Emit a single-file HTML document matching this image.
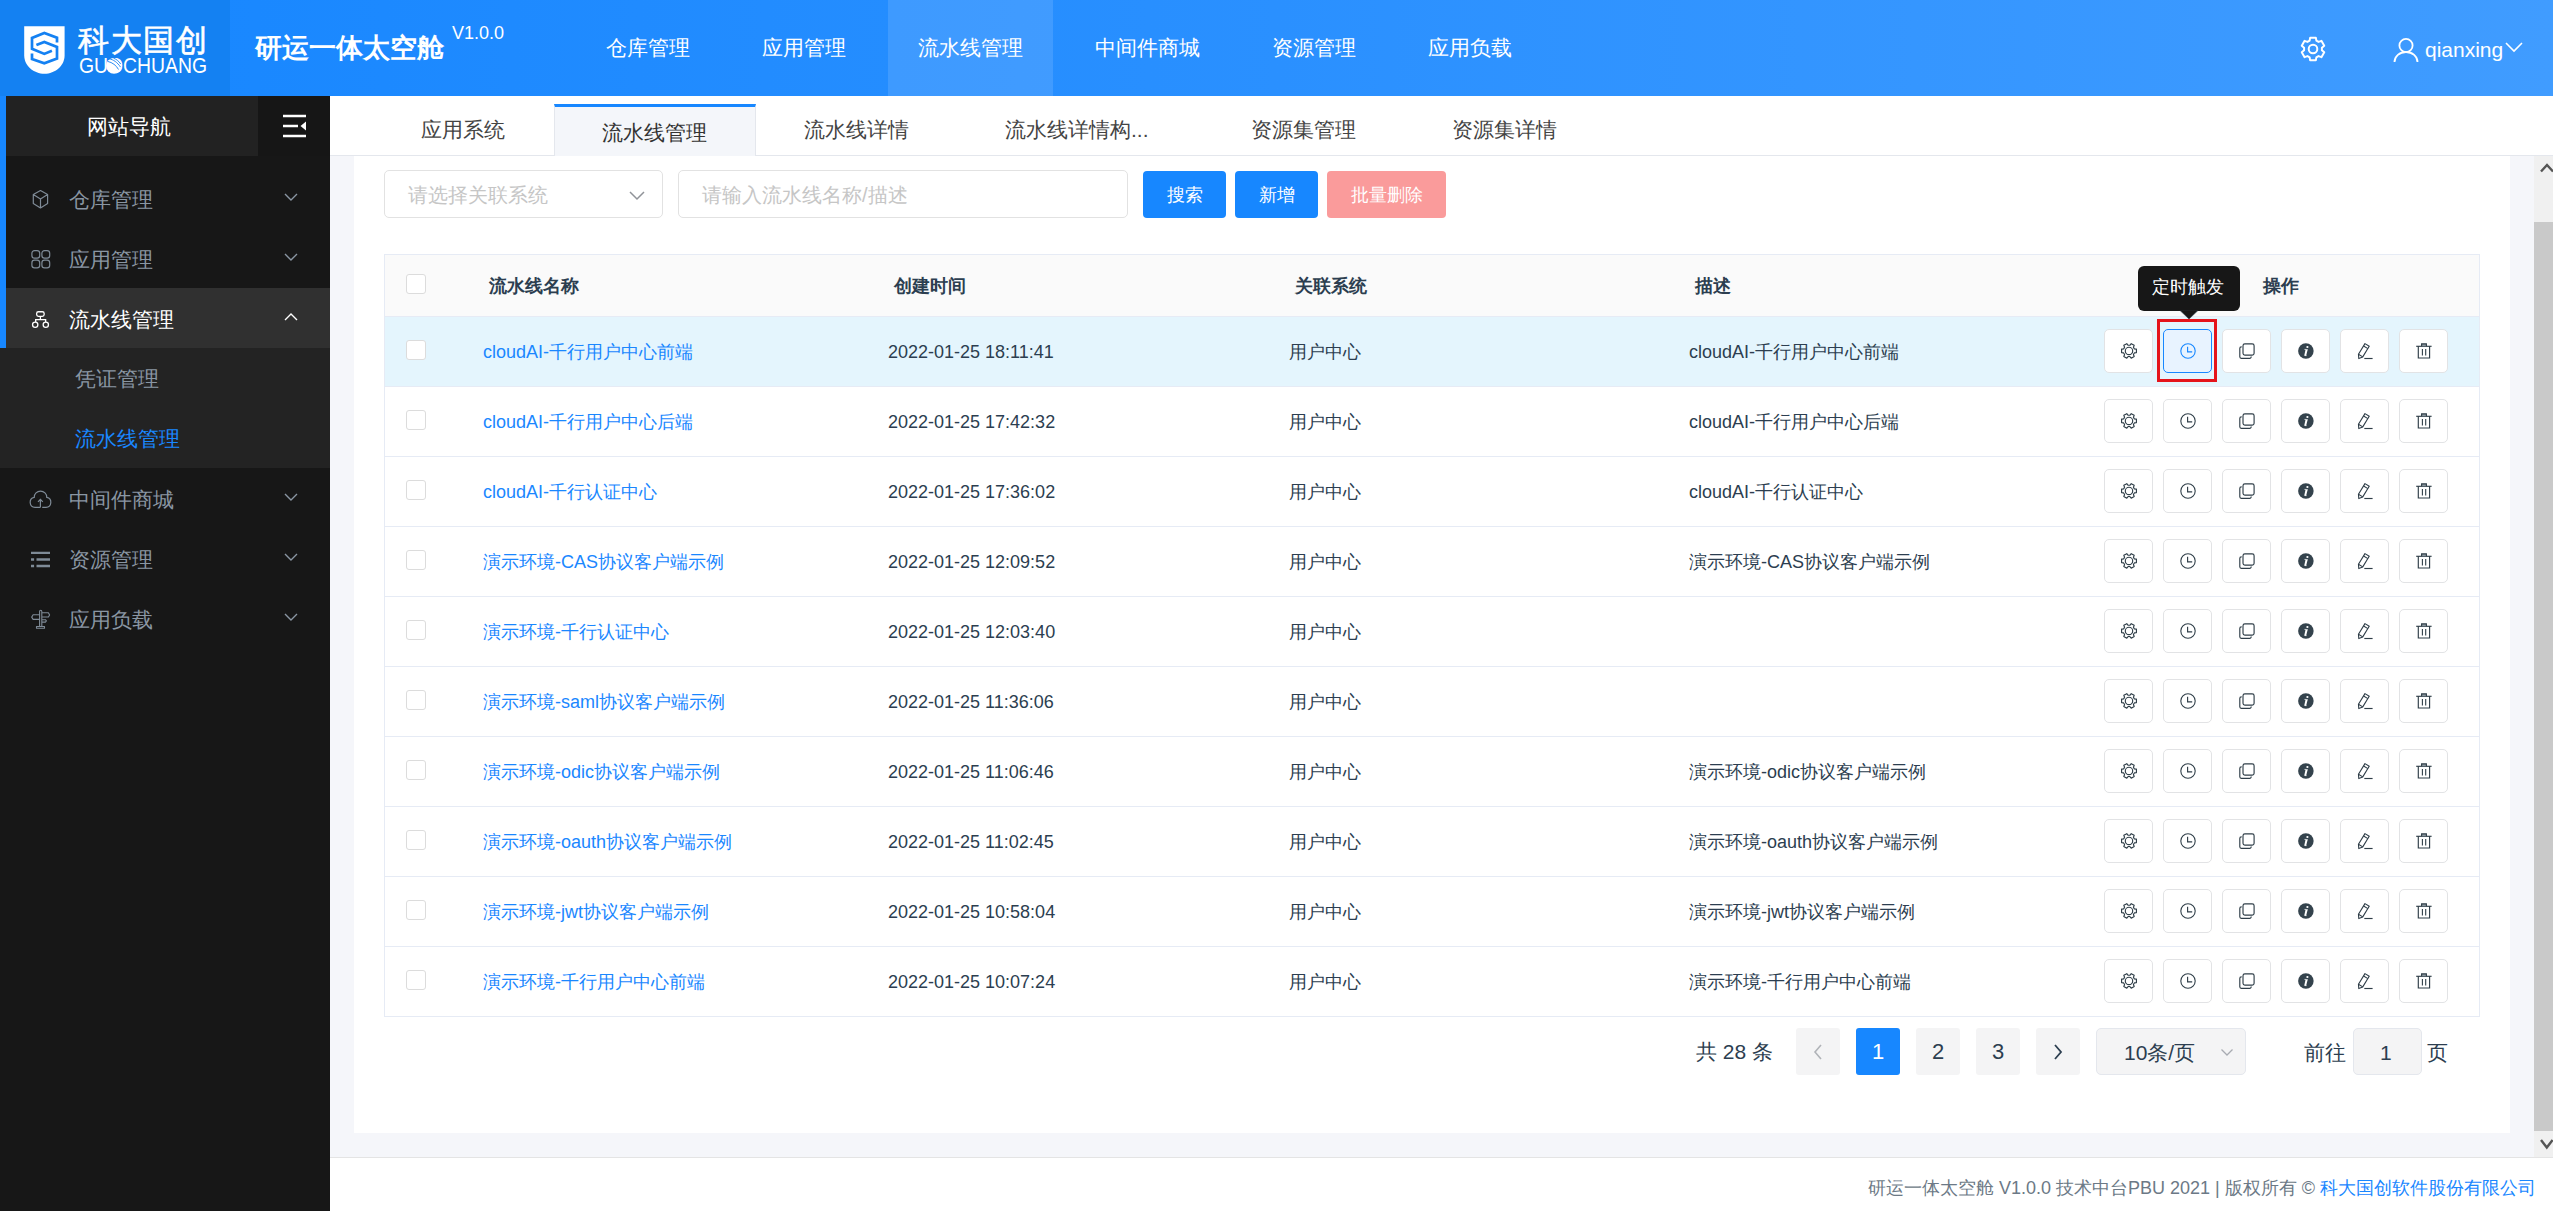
<!DOCTYPE html><html><head><meta charset="utf-8"><style>
*{box-sizing:border-box;margin:0;padding:0}
html,body{width:2553px;height:1211px;overflow:hidden;background:#fff;font-family:"Liberation Sans",sans-serif;color:#2c3e50}
.a{position:absolute}
.t{position:absolute;white-space:nowrap;line-height:1}
#hdr{left:0;top:0;width:2553px;height:96px;background:linear-gradient(90deg,#1686ff 0%,#2a90ff 50%,#409cff 100%)}
#logo{left:0;top:0;width:230px;height:96px;background:#1481f2}
.nav{color:#fff;font-size:21px}
#side{left:0;top:96px;width:330px;height:1115px;background:#171717}
.mi{color:#8a96a3;font-size:21px}
#main{left:330px;top:96px;width:2223px;height:1115px;background:#fff}
#tabs{left:330px;top:96px;width:2223px;height:60px;background:#fff;border-bottom:1px solid #e4e7ed}
.tab{color:#444;font-size:21px}
#gray{left:330px;top:156px;width:2204px;height:1001px;background:#f5f6fa}
#card{left:354px;top:156px;width:2156px;height:977px;background:#fff}
.btn{border-radius:4px;color:#fff;font-size:18px;display:flex;align-items:center;justify-content:center}
.cb{width:20px;height:20px;border:1px solid #dcdcdc;border-radius:3px;background:#fff}
.cell{font-size:18px;color:#2c3e50}
.hd{font-size:18px;font-weight:bold;color:#2c3e50}
.lnk{color:#1a87ff}
.ab{width:49px;height:44px;border:1px solid #e2e3e5;border-radius:5px;background:#fff;display:flex;align-items:center;justify-content:center}
.pg{width:44px;height:47px;background:#f4f4f5;border-radius:3px;font-size:22px;color:#2c3e50;display:flex;align-items:center;justify-content:center}
</style></head><body>
<div class="a" id="hdr"></div><div class="a" id="logo"></div>
<svg class="a" style="left:24px;top:26px" width="41" height="48" viewBox="0 0 41 48"><path d="M0.2 0.2H40.6V29.3C40.6 40 31 47.8 20.4 47.8S0.2 40 0.2 29.3z" fill="#fff"/><path d="M33 16.6V11.7L20.3 6.9 8 12V22.8L20.3 27.9 27.9 24.7" fill="none" stroke="#1481f2" stroke-width="2.7"/><path d="M12.4 19.1 20.3 15.9 33 21V32.5L20.3 37.2 8 33V27.6" fill="none" stroke="#1481f2" stroke-width="2.7"/></svg>
<div class="t" style="left:78px;top:25px;font-size:31px;color:#fff;letter-spacing:1.5px;-webkit-text-stroke:0.6px #fff">科大国创</div>
<svg class="a" style="left:78px;top:52px" width="132" height="26" viewBox="0 0 132 26"><text x="1" y="21.4" font-family="Liberation Sans" font-size="21.5" fill="#fff" textLength="128" lengthAdjust="spacingAndGlyphs">GUOCHUANG</text><circle cx="36" cy="13.8" r="7.9" fill="#fff"/><path d="M31.5 6.9c3.5 0.6 8 3.4 11 8.2M35.5 6.2c3 1 5.5 3.2 7.2 5.8M30 9.5c4 0.8 8.5 4 10.5 8" fill="none" stroke="#1481f2" stroke-width="0.9"/></svg>
<div class="t" style="left:255px;top:35px;font-size:27px;font-weight:bold;color:#fff">研运一体太空舱</div>
<div class="t" style="left:452px;top:24px;font-size:18px;color:#fff">V1.0.0</div>
<div class="a" style="left:888px;top:0;width:165px;height:96px;background:rgba(255,255,255,0.12)"></div>
<div class="t nav" style="left:606px;top:37px">仓库管理</div>
<div class="t nav" style="left:762px;top:37px">应用管理</div>
<div class="t nav" style="left:918px;top:37px">流水线管理</div>
<div class="t nav" style="left:1095px;top:37px">中间件商城</div>
<div class="t nav" style="left:1272px;top:37px">资源管理</div>
<div class="t nav" style="left:1428px;top:37px">应用负载</div>
<svg class="a" style="left:2298px;top:34px" width="30" height="30" viewBox="0 0 30 30"><path d="M23.34 18.37 L26.35 17.83 L26.35 12.17 L23.34 11.63 L22.09 9.46 L23.13 6.58 L18.22 3.75 L16.25 6.09 L13.75 6.09 L11.78 3.75 L6.87 6.58 L7.91 9.46 L6.66 11.63 L3.65 12.17 L3.65 17.83 L6.66 18.37 L7.91 20.54 L6.87 23.42 L11.78 26.25 L13.75 23.91 L16.25 23.91 L18.22 26.25 L23.13 23.42 L22.09 20.54Z" transform="rotate(30 15 15)" fill="none" stroke="#fff" stroke-width="2" stroke-linejoin="round"/><circle cx="15" cy="15" r="4.3" fill="none" stroke="#fff" stroke-width="2"/></svg>
<svg class="a" style="left:2392px;top:36px" width="28" height="28" viewBox="0 0 28 28"><circle cx="14" cy="9.5" r="6.6" fill="none" stroke="#fff" stroke-width="1.8"/><path d="M2.5 26a11.5 10 0 0 1 23 0" fill="none" stroke="#fff" stroke-width="1.8"/></svg>
<div class="t" style="left:2425px;top:39px;font-size:21px;color:#fff">qianxing</div>
<svg class="a" style="left:2504px;top:41px" width="20" height="12" viewBox="0 0 20 12"><path d="M2 2l8 8 8-8" fill="none" stroke="#fff" stroke-width="1.6"/></svg>
<div class="a" id="side"></div>
<div class="a" style="left:6px;top:96px;width:252px;height:60px;background:#222"></div>
<div class="a" style="left:258px;top:96px;width:72px;height:60px;background:#161616"></div>
<div class="a" style="left:0;top:96px;width:6px;height:252px;background:#1787ff"></div>
<div class="t" style="left:87px;top:116px;font-size:21px;color:#fff">网站导航</div>
<svg class="a" style="left:282px;top:114px" width="26" height="24" viewBox="0 0 26 24"><path d="M1 2h23M1 12h15M1 22h23" stroke="#fff" stroke-width="2.4"/><path d="M24 7.5v9L18.5 12z" fill="#fff"/></svg>
<div class="a" style="left:6px;top:288px;width:324px;height:60px;background:#303030"></div>
<div class="a" style="left:0;top:348px;width:330px;height:120px;background:#232323"></div>
<div class="t mi" style="left:69px;top:189px;color:#8a96a3">仓库管理</div>
<svg class="a" style="left:283px;top:192px" width="16" height="10" viewBox="0 0 16 10"><path d="M2 2l6 6 6-6" fill="none" stroke="#8a96a3" stroke-width="1.4"/></svg>
<div class="t mi" style="left:69px;top:249px;color:#8a96a3">应用管理</div>
<svg class="a" style="left:283px;top:252px" width="16" height="10" viewBox="0 0 16 10"><path d="M2 2l6 6 6-6" fill="none" stroke="#8a96a3" stroke-width="1.4"/></svg>
<div class="t mi" style="left:69px;top:309px;color:#fff">流水线管理</div>
<svg class="a" style="left:283px;top:312px" width="16" height="10" viewBox="0 0 16 10"><path d="M2 8l6-6 6 6" fill="none" stroke="#fff" stroke-width="1.4"/></svg>
<div class="t mi" style="left:69px;top:489px;color:#8a96a3">中间件商城</div>
<svg class="a" style="left:283px;top:492px" width="16" height="10" viewBox="0 0 16 10"><path d="M2 2l6 6 6-6" fill="none" stroke="#8a96a3" stroke-width="1.4"/></svg>
<div class="t mi" style="left:69px;top:549px;color:#8a96a3">资源管理</div>
<svg class="a" style="left:283px;top:552px" width="16" height="10" viewBox="0 0 16 10"><path d="M2 2l6 6 6-6" fill="none" stroke="#8a96a3" stroke-width="1.4"/></svg>
<div class="t mi" style="left:69px;top:609px;color:#8a96a3">应用负载</div>
<svg class="a" style="left:283px;top:612px" width="16" height="10" viewBox="0 0 16 10"><path d="M2 2l6 6 6-6" fill="none" stroke="#8a96a3" stroke-width="1.4"/></svg>
<svg class="a" style="left:31px;top:189px" width="19" height="21" viewBox="0 0 19 21"><path d="M9.5 1.6 16.6 5.6V14.6L9.5 18.9 2.3 14.6V5.6Z M2.3 5.6 9.5 9.9 16.6 5.6 M9.5 9.9V18.9" fill="none" stroke="#7f8b97" stroke-width="1.2" stroke-linejoin="round"/></svg>
<svg class="a" style="left:31px;top:249px" width="20" height="20" viewBox="0 0 20 20"><rect x="0.9" y="1.6" width="7.8" height="7.6" rx="2.6" fill="none" stroke="#7f8b97" stroke-width="1.2"/><rect x="10.9" y="1.6" width="7.8" height="7.6" rx="2.6" fill="none" stroke="#7f8b97" stroke-width="1.2"/><rect x="0.9" y="11.2" width="7.8" height="7.6" rx="2.6" fill="none" stroke="#7f8b97" stroke-width="1.2"/><rect x="10.9" y="11.2" width="7.8" height="7.6" rx="2.6" fill="none" stroke="#7f8b97" stroke-width="1.2"/></svg>
<svg class="a" style="left:31px;top:309px" width="20" height="20" viewBox="0 0 20 20"><rect x="5.65" y="2.75" width="7.5" height="4.6" rx="1.8" fill="none" stroke="#fff" stroke-width="1.3"/><path d="M9.4 7.35V10.65M4.65 13V10.65H14.65V13" fill="none" stroke="#fff" stroke-width="1.3"/><circle cx="4.2" cy="15.8" r="2.65" fill="none" stroke="#fff" stroke-width="1.3"/><circle cx="14.8" cy="15.8" r="2.65" fill="none" stroke="#fff" stroke-width="1.3"/></svg>
<svg class="a" style="left:29px;top:488px" width="24" height="22" viewBox="0 0 24 22"><path d="M11.4 19.3H6A5 5 0 0 1 5.2 9.4A6.2 6.2 0 0 1 17.8 9.4A5 5 0 0 1 17 19.3H13.2" fill="none" stroke="#7f8b97" stroke-width="1.2"/><path d="M11.4 19.3V11.6M9 13.8 11.4 11.3 13.8 13.8" fill="none" stroke="#7f8b97" stroke-width="1.2"/></svg>
<svg class="a" style="left:31px;top:550px" width="20" height="19" viewBox="0 0 20 19"><path d="M0 2.9H19M0 9.5H3.1M5.5 9.5H19M0 16H3.1M5.5 16H19" stroke="#7f8b97" stroke-width="2.4"/></svg>
<svg class="a" style="left:31px;top:608px" width="20" height="22" viewBox="0 0 20 22"><path d="M8.6 18.5V3.4a1.1 1.1 0 0 1 2.2 0V18.5 M10.8 4.7H17.4L18.6 6.9 17.4 9H10.8 M8.6 6.8H2.1L0.7 9.1 2.1 11.4H8.6 M10.8 11.7H14.4L15.4 12.9 14.4 14.1H10.8 M5.5 18.5H13.5V20.3H5.5Z" fill="none" stroke="#7f8b97" stroke-width="1.1" stroke-linejoin="round"/></svg>
<div class="t" style="left:75px;top:368px;font-size:21px;color:#8a96a3">凭证管理</div>
<div class="t" style="left:75px;top:428px;font-size:21px;color:#1a87ff">流水线管理</div>
<div class="a" id="tabs"></div>
<div class="a" style="left:554px;top:104px;width:202px;height:52px;background:#f4f6fa;border-top:3px solid #1787ff;border-left:1px solid #e4e7ed;border-right:1px solid #e4e7ed"></div>
<div class="t tab" style="left:421px;top:119px;color:#444">应用系统</div>
<div class="t tab" style="left:602px;top:122px;color:#333">流水线管理</div>
<div class="t tab" style="left:804px;top:119px;color:#444">流水线详情</div>
<div class="t tab" style="left:1005px;top:119px;color:#444">流水线详情构...</div>
<div class="t tab" style="left:1251px;top:119px;color:#444">资源集管理</div>
<div class="t tab" style="left:1452px;top:119px;color:#444">资源集详情</div>
<div class="a" id="gray"></div><div class="a" id="card"></div>
<div class="a" style="left:384px;top:170px;width:279px;height:48px;border:1px solid #e2e2e2;border-radius:5px;background:#fff"></div>
<div class="t" style="left:408px;top:185px;font-size:20px;color:#c6c6c6">请选择关联系统</div>
<svg class="a" style="left:628px;top:190px" width="18" height="12" viewBox="0 0 18 12"><path d="M2 2l7 7 7-7" fill="none" stroke="#909399" stroke-width="1.5"/></svg>
<div class="a" style="left:678px;top:170px;width:450px;height:48px;border:1px solid #e2e2e2;border-radius:5px;background:#fff"></div>
<div class="t" style="left:702px;top:185px;font-size:20px;color:#c6c6c6">请输入流水线名称/描述</div>
<div class="a btn" style="left:1143px;top:171px;width:83px;height:47px;background:#1787ff">搜索</div>
<div class="a btn" style="left:1235px;top:171px;width:83px;height:47px;background:#1787ff">新增</div>
<div class="a btn" style="left:1327px;top:171px;width:119px;height:47px;background:#fa9b9b">批量删除</div>
<div class="a" style="left:384px;top:254px;width:2096px;height:763px;border:1px solid #e6ebf5;background:#fff"></div>
<div class="a" style="left:385px;top:255px;width:2094px;height:61px;background:#fafafa"></div>
<div class="a" style="left:385px;top:316px;width:2094px;height:1px;background:#e6ebf5"></div>
<div class="a cb" style="left:406px;top:274px"></div>
<div class="t hd" style="left:489px;top:277px">流水线名称</div>
<div class="t hd" style="left:894px;top:277px">创建时间</div>
<div class="t hd" style="left:1295px;top:277px">关联系统</div>
<div class="t hd" style="left:1695px;top:277px">描述</div>
<div class="t hd" style="left:2263px;top:277px">操作</div>
<div class="a" style="left:385px;top:317px;width:2094px;height:69px;background:#e4f5fd"></div>
<div class="a" style="left:385px;top:386px;width:2094px;height:1px;background:#e6ebf5"></div>
<div class="a cb" style="left:406px;top:340px"></div>
<div class="t cell lnk" style="left:483px;top:343px">cloudAI-千行用户中心前端</div>
<div class="t cell" style="left:888px;top:343px">2022-01-25 18:11:41</div>
<div class="t cell" style="left:1289px;top:343px">用户中心</div>
<div class="t cell" style="left:1689px;top:343px">cloudAI-千行用户中心前端</div>
<div class="a ab" style="left:2104px;top:329px;"><svg width="18" height="18" viewBox="0 0 18 18"><path d="M14.32 10.94 L16.41 10.61 L16.41 7.19 L14.32 6.86 L13.43 5.31 L14.18 3.34 L11.22 1.63 L9.89 3.27 L8.11 3.27 L6.78 1.63 L3.82 3.34 L4.57 5.31 L3.68 6.86 L1.59 7.19 L1.59 10.61 L3.68 10.94 L4.57 12.49 L3.82 14.46 L6.78 16.17 L8.11 14.53 L9.89 14.53 L11.22 16.17 L14.18 14.46 L13.43 12.49Z" fill="none" stroke="#2f3e48" stroke-width="1.15" stroke-linejoin="round"/><circle cx="9" cy="8.9" r="3.7" fill="none" stroke="#2f3e48" stroke-width="1.15"/></svg></div>
<div class="a ab" style="left:2163px;top:329px;border-color:#1787ff;background:#e8f3ff;"><svg width="18" height="18" viewBox="0 0 18 18"><circle cx="9" cy="9" r="7.2" fill="none" stroke="#1787ff" stroke-width="1.1"/><path d="M8.6 4.8v5h4.6" fill="none" stroke="#1787ff" stroke-width="1.15"/></svg></div>
<div class="a ab" style="left:2222px;top:329px;"><svg width="18" height="18" viewBox="0 0 18 18"><rect x="5" y="1.8" width="11.1" height="11.3" rx="1.9" fill="none" stroke="#2f3e48" stroke-width="1.15"/><path d="M3.7 4.9h-.4a1.5 1.5 0 0 0-1.5 1.5v8.4a1.5 1.5 0 0 0 1.5 1.5h8.4a1.5 1.5 0 0 0 1.5-1.5v-.3" fill="none" stroke="#2f3e48" stroke-width="1.15"/></svg></div>
<div class="a ab" style="left:2281px;top:329px;"><svg width="18" height="18" viewBox="0 0 18 18"><circle cx="8.9" cy="9" r="7.75" fill="#34434d"/><ellipse cx="10.4" cy="4.9" rx="1.1" ry="1" fill="#fff"/><path d="M8.6 7.2h2.2l-1.7 6.6H7.2z" fill="#fff"/><path d="M7.4 7.4h1.6M7.9 13.6h1.7" stroke="#fff" stroke-width="0.7"/></svg></div>
<div class="a ab" style="left:2340px;top:329px;"><svg width="18" height="18" viewBox="0 0 18 18"><path d="M8.96 1.6 13.24 4.2 6.74 14.9 2.78 16.6 2.46 12.3Z" fill="none" stroke="#2f3e48" stroke-width="1.1" stroke-linejoin="round"/><path d="M7.6 4.0 11.9 6.6M2.46 12.3 6.74 14.9" stroke="#2f3e48" stroke-width="1.1"/><path d="M8.3 16.5H16.6" stroke="#2f3e48" stroke-width="1.15"/></svg></div>
<div class="a ab" style="left:2399px;top:329px;"><svg width="18" height="18" viewBox="0 0 18 18"><path d="M1.2 4.3H16.6" stroke="#2f3e48" stroke-width="1.15"/><path d="M6.6 4.2V1.9h4.8v2.3" fill="#8a969e" stroke="#2f3e48" stroke-width="1.1"/><path d="M3.3 4.3V16h11.3V4.3" fill="none" stroke="#2f3e48" stroke-width="1.15"/><path d="M7.4 7.1v6.5M10.7 7.1v6.5" stroke="#2f3e48" stroke-width="1.1"/></svg></div>
<div class="a" style="left:385px;top:456px;width:2094px;height:1px;background:#e6ebf5"></div>
<div class="a cb" style="left:406px;top:410px"></div>
<div class="t cell lnk" style="left:483px;top:413px">cloudAI-千行用户中心后端</div>
<div class="t cell" style="left:888px;top:413px">2022-01-25 17:42:32</div>
<div class="t cell" style="left:1289px;top:413px">用户中心</div>
<div class="t cell" style="left:1689px;top:413px">cloudAI-千行用户中心后端</div>
<div class="a ab" style="left:2104px;top:399px;"><svg width="18" height="18" viewBox="0 0 18 18"><path d="M14.32 10.94 L16.41 10.61 L16.41 7.19 L14.32 6.86 L13.43 5.31 L14.18 3.34 L11.22 1.63 L9.89 3.27 L8.11 3.27 L6.78 1.63 L3.82 3.34 L4.57 5.31 L3.68 6.86 L1.59 7.19 L1.59 10.61 L3.68 10.94 L4.57 12.49 L3.82 14.46 L6.78 16.17 L8.11 14.53 L9.89 14.53 L11.22 16.17 L14.18 14.46 L13.43 12.49Z" fill="none" stroke="#2f3e48" stroke-width="1.15" stroke-linejoin="round"/><circle cx="9" cy="8.9" r="3.7" fill="none" stroke="#2f3e48" stroke-width="1.15"/></svg></div>
<div class="a ab" style="left:2163px;top:399px;"><svg width="18" height="18" viewBox="0 0 18 18"><circle cx="9" cy="9" r="7.2" fill="none" stroke="#2f3e48" stroke-width="1.1"/><path d="M8.6 4.8v5h4.6" fill="none" stroke="#2f3e48" stroke-width="1.15"/></svg></div>
<div class="a ab" style="left:2222px;top:399px;"><svg width="18" height="18" viewBox="0 0 18 18"><rect x="5" y="1.8" width="11.1" height="11.3" rx="1.9" fill="none" stroke="#2f3e48" stroke-width="1.15"/><path d="M3.7 4.9h-.4a1.5 1.5 0 0 0-1.5 1.5v8.4a1.5 1.5 0 0 0 1.5 1.5h8.4a1.5 1.5 0 0 0 1.5-1.5v-.3" fill="none" stroke="#2f3e48" stroke-width="1.15"/></svg></div>
<div class="a ab" style="left:2281px;top:399px;"><svg width="18" height="18" viewBox="0 0 18 18"><circle cx="8.9" cy="9" r="7.75" fill="#34434d"/><ellipse cx="10.4" cy="4.9" rx="1.1" ry="1" fill="#fff"/><path d="M8.6 7.2h2.2l-1.7 6.6H7.2z" fill="#fff"/><path d="M7.4 7.4h1.6M7.9 13.6h1.7" stroke="#fff" stroke-width="0.7"/></svg></div>
<div class="a ab" style="left:2340px;top:399px;"><svg width="18" height="18" viewBox="0 0 18 18"><path d="M8.96 1.6 13.24 4.2 6.74 14.9 2.78 16.6 2.46 12.3Z" fill="none" stroke="#2f3e48" stroke-width="1.1" stroke-linejoin="round"/><path d="M7.6 4.0 11.9 6.6M2.46 12.3 6.74 14.9" stroke="#2f3e48" stroke-width="1.1"/><path d="M8.3 16.5H16.6" stroke="#2f3e48" stroke-width="1.15"/></svg></div>
<div class="a ab" style="left:2399px;top:399px;"><svg width="18" height="18" viewBox="0 0 18 18"><path d="M1.2 4.3H16.6" stroke="#2f3e48" stroke-width="1.15"/><path d="M6.6 4.2V1.9h4.8v2.3" fill="#8a969e" stroke="#2f3e48" stroke-width="1.1"/><path d="M3.3 4.3V16h11.3V4.3" fill="none" stroke="#2f3e48" stroke-width="1.15"/><path d="M7.4 7.1v6.5M10.7 7.1v6.5" stroke="#2f3e48" stroke-width="1.1"/></svg></div>
<div class="a" style="left:385px;top:526px;width:2094px;height:1px;background:#e6ebf5"></div>
<div class="a cb" style="left:406px;top:480px"></div>
<div class="t cell lnk" style="left:483px;top:483px">cloudAI-千行认证中心</div>
<div class="t cell" style="left:888px;top:483px">2022-01-25 17:36:02</div>
<div class="t cell" style="left:1289px;top:483px">用户中心</div>
<div class="t cell" style="left:1689px;top:483px">cloudAI-千行认证中心</div>
<div class="a ab" style="left:2104px;top:469px;"><svg width="18" height="18" viewBox="0 0 18 18"><path d="M14.32 10.94 L16.41 10.61 L16.41 7.19 L14.32 6.86 L13.43 5.31 L14.18 3.34 L11.22 1.63 L9.89 3.27 L8.11 3.27 L6.78 1.63 L3.82 3.34 L4.57 5.31 L3.68 6.86 L1.59 7.19 L1.59 10.61 L3.68 10.94 L4.57 12.49 L3.82 14.46 L6.78 16.17 L8.11 14.53 L9.89 14.53 L11.22 16.17 L14.18 14.46 L13.43 12.49Z" fill="none" stroke="#2f3e48" stroke-width="1.15" stroke-linejoin="round"/><circle cx="9" cy="8.9" r="3.7" fill="none" stroke="#2f3e48" stroke-width="1.15"/></svg></div>
<div class="a ab" style="left:2163px;top:469px;"><svg width="18" height="18" viewBox="0 0 18 18"><circle cx="9" cy="9" r="7.2" fill="none" stroke="#2f3e48" stroke-width="1.1"/><path d="M8.6 4.8v5h4.6" fill="none" stroke="#2f3e48" stroke-width="1.15"/></svg></div>
<div class="a ab" style="left:2222px;top:469px;"><svg width="18" height="18" viewBox="0 0 18 18"><rect x="5" y="1.8" width="11.1" height="11.3" rx="1.9" fill="none" stroke="#2f3e48" stroke-width="1.15"/><path d="M3.7 4.9h-.4a1.5 1.5 0 0 0-1.5 1.5v8.4a1.5 1.5 0 0 0 1.5 1.5h8.4a1.5 1.5 0 0 0 1.5-1.5v-.3" fill="none" stroke="#2f3e48" stroke-width="1.15"/></svg></div>
<div class="a ab" style="left:2281px;top:469px;"><svg width="18" height="18" viewBox="0 0 18 18"><circle cx="8.9" cy="9" r="7.75" fill="#34434d"/><ellipse cx="10.4" cy="4.9" rx="1.1" ry="1" fill="#fff"/><path d="M8.6 7.2h2.2l-1.7 6.6H7.2z" fill="#fff"/><path d="M7.4 7.4h1.6M7.9 13.6h1.7" stroke="#fff" stroke-width="0.7"/></svg></div>
<div class="a ab" style="left:2340px;top:469px;"><svg width="18" height="18" viewBox="0 0 18 18"><path d="M8.96 1.6 13.24 4.2 6.74 14.9 2.78 16.6 2.46 12.3Z" fill="none" stroke="#2f3e48" stroke-width="1.1" stroke-linejoin="round"/><path d="M7.6 4.0 11.9 6.6M2.46 12.3 6.74 14.9" stroke="#2f3e48" stroke-width="1.1"/><path d="M8.3 16.5H16.6" stroke="#2f3e48" stroke-width="1.15"/></svg></div>
<div class="a ab" style="left:2399px;top:469px;"><svg width="18" height="18" viewBox="0 0 18 18"><path d="M1.2 4.3H16.6" stroke="#2f3e48" stroke-width="1.15"/><path d="M6.6 4.2V1.9h4.8v2.3" fill="#8a969e" stroke="#2f3e48" stroke-width="1.1"/><path d="M3.3 4.3V16h11.3V4.3" fill="none" stroke="#2f3e48" stroke-width="1.15"/><path d="M7.4 7.1v6.5M10.7 7.1v6.5" stroke="#2f3e48" stroke-width="1.1"/></svg></div>
<div class="a" style="left:385px;top:596px;width:2094px;height:1px;background:#e6ebf5"></div>
<div class="a cb" style="left:406px;top:550px"></div>
<div class="t cell lnk" style="left:483px;top:553px">演示环境-CAS协议客户端示例</div>
<div class="t cell" style="left:888px;top:553px">2022-01-25 12:09:52</div>
<div class="t cell" style="left:1289px;top:553px">用户中心</div>
<div class="t cell" style="left:1689px;top:553px">演示环境-CAS协议客户端示例</div>
<div class="a ab" style="left:2104px;top:539px;"><svg width="18" height="18" viewBox="0 0 18 18"><path d="M14.32 10.94 L16.41 10.61 L16.41 7.19 L14.32 6.86 L13.43 5.31 L14.18 3.34 L11.22 1.63 L9.89 3.27 L8.11 3.27 L6.78 1.63 L3.82 3.34 L4.57 5.31 L3.68 6.86 L1.59 7.19 L1.59 10.61 L3.68 10.94 L4.57 12.49 L3.82 14.46 L6.78 16.17 L8.11 14.53 L9.89 14.53 L11.22 16.17 L14.18 14.46 L13.43 12.49Z" fill="none" stroke="#2f3e48" stroke-width="1.15" stroke-linejoin="round"/><circle cx="9" cy="8.9" r="3.7" fill="none" stroke="#2f3e48" stroke-width="1.15"/></svg></div>
<div class="a ab" style="left:2163px;top:539px;"><svg width="18" height="18" viewBox="0 0 18 18"><circle cx="9" cy="9" r="7.2" fill="none" stroke="#2f3e48" stroke-width="1.1"/><path d="M8.6 4.8v5h4.6" fill="none" stroke="#2f3e48" stroke-width="1.15"/></svg></div>
<div class="a ab" style="left:2222px;top:539px;"><svg width="18" height="18" viewBox="0 0 18 18"><rect x="5" y="1.8" width="11.1" height="11.3" rx="1.9" fill="none" stroke="#2f3e48" stroke-width="1.15"/><path d="M3.7 4.9h-.4a1.5 1.5 0 0 0-1.5 1.5v8.4a1.5 1.5 0 0 0 1.5 1.5h8.4a1.5 1.5 0 0 0 1.5-1.5v-.3" fill="none" stroke="#2f3e48" stroke-width="1.15"/></svg></div>
<div class="a ab" style="left:2281px;top:539px;"><svg width="18" height="18" viewBox="0 0 18 18"><circle cx="8.9" cy="9" r="7.75" fill="#34434d"/><ellipse cx="10.4" cy="4.9" rx="1.1" ry="1" fill="#fff"/><path d="M8.6 7.2h2.2l-1.7 6.6H7.2z" fill="#fff"/><path d="M7.4 7.4h1.6M7.9 13.6h1.7" stroke="#fff" stroke-width="0.7"/></svg></div>
<div class="a ab" style="left:2340px;top:539px;"><svg width="18" height="18" viewBox="0 0 18 18"><path d="M8.96 1.6 13.24 4.2 6.74 14.9 2.78 16.6 2.46 12.3Z" fill="none" stroke="#2f3e48" stroke-width="1.1" stroke-linejoin="round"/><path d="M7.6 4.0 11.9 6.6M2.46 12.3 6.74 14.9" stroke="#2f3e48" stroke-width="1.1"/><path d="M8.3 16.5H16.6" stroke="#2f3e48" stroke-width="1.15"/></svg></div>
<div class="a ab" style="left:2399px;top:539px;"><svg width="18" height="18" viewBox="0 0 18 18"><path d="M1.2 4.3H16.6" stroke="#2f3e48" stroke-width="1.15"/><path d="M6.6 4.2V1.9h4.8v2.3" fill="#8a969e" stroke="#2f3e48" stroke-width="1.1"/><path d="M3.3 4.3V16h11.3V4.3" fill="none" stroke="#2f3e48" stroke-width="1.15"/><path d="M7.4 7.1v6.5M10.7 7.1v6.5" stroke="#2f3e48" stroke-width="1.1"/></svg></div>
<div class="a" style="left:385px;top:666px;width:2094px;height:1px;background:#e6ebf5"></div>
<div class="a cb" style="left:406px;top:620px"></div>
<div class="t cell lnk" style="left:483px;top:623px">演示环境-千行认证中心</div>
<div class="t cell" style="left:888px;top:623px">2022-01-25 12:03:40</div>
<div class="t cell" style="left:1289px;top:623px">用户中心</div>
<div class="a ab" style="left:2104px;top:609px;"><svg width="18" height="18" viewBox="0 0 18 18"><path d="M14.32 10.94 L16.41 10.61 L16.41 7.19 L14.32 6.86 L13.43 5.31 L14.18 3.34 L11.22 1.63 L9.89 3.27 L8.11 3.27 L6.78 1.63 L3.82 3.34 L4.57 5.31 L3.68 6.86 L1.59 7.19 L1.59 10.61 L3.68 10.94 L4.57 12.49 L3.82 14.46 L6.78 16.17 L8.11 14.53 L9.89 14.53 L11.22 16.17 L14.18 14.46 L13.43 12.49Z" fill="none" stroke="#2f3e48" stroke-width="1.15" stroke-linejoin="round"/><circle cx="9" cy="8.9" r="3.7" fill="none" stroke="#2f3e48" stroke-width="1.15"/></svg></div>
<div class="a ab" style="left:2163px;top:609px;"><svg width="18" height="18" viewBox="0 0 18 18"><circle cx="9" cy="9" r="7.2" fill="none" stroke="#2f3e48" stroke-width="1.1"/><path d="M8.6 4.8v5h4.6" fill="none" stroke="#2f3e48" stroke-width="1.15"/></svg></div>
<div class="a ab" style="left:2222px;top:609px;"><svg width="18" height="18" viewBox="0 0 18 18"><rect x="5" y="1.8" width="11.1" height="11.3" rx="1.9" fill="none" stroke="#2f3e48" stroke-width="1.15"/><path d="M3.7 4.9h-.4a1.5 1.5 0 0 0-1.5 1.5v8.4a1.5 1.5 0 0 0 1.5 1.5h8.4a1.5 1.5 0 0 0 1.5-1.5v-.3" fill="none" stroke="#2f3e48" stroke-width="1.15"/></svg></div>
<div class="a ab" style="left:2281px;top:609px;"><svg width="18" height="18" viewBox="0 0 18 18"><circle cx="8.9" cy="9" r="7.75" fill="#34434d"/><ellipse cx="10.4" cy="4.9" rx="1.1" ry="1" fill="#fff"/><path d="M8.6 7.2h2.2l-1.7 6.6H7.2z" fill="#fff"/><path d="M7.4 7.4h1.6M7.9 13.6h1.7" stroke="#fff" stroke-width="0.7"/></svg></div>
<div class="a ab" style="left:2340px;top:609px;"><svg width="18" height="18" viewBox="0 0 18 18"><path d="M8.96 1.6 13.24 4.2 6.74 14.9 2.78 16.6 2.46 12.3Z" fill="none" stroke="#2f3e48" stroke-width="1.1" stroke-linejoin="round"/><path d="M7.6 4.0 11.9 6.6M2.46 12.3 6.74 14.9" stroke="#2f3e48" stroke-width="1.1"/><path d="M8.3 16.5H16.6" stroke="#2f3e48" stroke-width="1.15"/></svg></div>
<div class="a ab" style="left:2399px;top:609px;"><svg width="18" height="18" viewBox="0 0 18 18"><path d="M1.2 4.3H16.6" stroke="#2f3e48" stroke-width="1.15"/><path d="M6.6 4.2V1.9h4.8v2.3" fill="#8a969e" stroke="#2f3e48" stroke-width="1.1"/><path d="M3.3 4.3V16h11.3V4.3" fill="none" stroke="#2f3e48" stroke-width="1.15"/><path d="M7.4 7.1v6.5M10.7 7.1v6.5" stroke="#2f3e48" stroke-width="1.1"/></svg></div>
<div class="a" style="left:385px;top:736px;width:2094px;height:1px;background:#e6ebf5"></div>
<div class="a cb" style="left:406px;top:690px"></div>
<div class="t cell lnk" style="left:483px;top:693px">演示环境-saml协议客户端示例</div>
<div class="t cell" style="left:888px;top:693px">2022-01-25 11:36:06</div>
<div class="t cell" style="left:1289px;top:693px">用户中心</div>
<div class="a ab" style="left:2104px;top:679px;"><svg width="18" height="18" viewBox="0 0 18 18"><path d="M14.32 10.94 L16.41 10.61 L16.41 7.19 L14.32 6.86 L13.43 5.31 L14.18 3.34 L11.22 1.63 L9.89 3.27 L8.11 3.27 L6.78 1.63 L3.82 3.34 L4.57 5.31 L3.68 6.86 L1.59 7.19 L1.59 10.61 L3.68 10.94 L4.57 12.49 L3.82 14.46 L6.78 16.17 L8.11 14.53 L9.89 14.53 L11.22 16.17 L14.18 14.46 L13.43 12.49Z" fill="none" stroke="#2f3e48" stroke-width="1.15" stroke-linejoin="round"/><circle cx="9" cy="8.9" r="3.7" fill="none" stroke="#2f3e48" stroke-width="1.15"/></svg></div>
<div class="a ab" style="left:2163px;top:679px;"><svg width="18" height="18" viewBox="0 0 18 18"><circle cx="9" cy="9" r="7.2" fill="none" stroke="#2f3e48" stroke-width="1.1"/><path d="M8.6 4.8v5h4.6" fill="none" stroke="#2f3e48" stroke-width="1.15"/></svg></div>
<div class="a ab" style="left:2222px;top:679px;"><svg width="18" height="18" viewBox="0 0 18 18"><rect x="5" y="1.8" width="11.1" height="11.3" rx="1.9" fill="none" stroke="#2f3e48" stroke-width="1.15"/><path d="M3.7 4.9h-.4a1.5 1.5 0 0 0-1.5 1.5v8.4a1.5 1.5 0 0 0 1.5 1.5h8.4a1.5 1.5 0 0 0 1.5-1.5v-.3" fill="none" stroke="#2f3e48" stroke-width="1.15"/></svg></div>
<div class="a ab" style="left:2281px;top:679px;"><svg width="18" height="18" viewBox="0 0 18 18"><circle cx="8.9" cy="9" r="7.75" fill="#34434d"/><ellipse cx="10.4" cy="4.9" rx="1.1" ry="1" fill="#fff"/><path d="M8.6 7.2h2.2l-1.7 6.6H7.2z" fill="#fff"/><path d="M7.4 7.4h1.6M7.9 13.6h1.7" stroke="#fff" stroke-width="0.7"/></svg></div>
<div class="a ab" style="left:2340px;top:679px;"><svg width="18" height="18" viewBox="0 0 18 18"><path d="M8.96 1.6 13.24 4.2 6.74 14.9 2.78 16.6 2.46 12.3Z" fill="none" stroke="#2f3e48" stroke-width="1.1" stroke-linejoin="round"/><path d="M7.6 4.0 11.9 6.6M2.46 12.3 6.74 14.9" stroke="#2f3e48" stroke-width="1.1"/><path d="M8.3 16.5H16.6" stroke="#2f3e48" stroke-width="1.15"/></svg></div>
<div class="a ab" style="left:2399px;top:679px;"><svg width="18" height="18" viewBox="0 0 18 18"><path d="M1.2 4.3H16.6" stroke="#2f3e48" stroke-width="1.15"/><path d="M6.6 4.2V1.9h4.8v2.3" fill="#8a969e" stroke="#2f3e48" stroke-width="1.1"/><path d="M3.3 4.3V16h11.3V4.3" fill="none" stroke="#2f3e48" stroke-width="1.15"/><path d="M7.4 7.1v6.5M10.7 7.1v6.5" stroke="#2f3e48" stroke-width="1.1"/></svg></div>
<div class="a" style="left:385px;top:806px;width:2094px;height:1px;background:#e6ebf5"></div>
<div class="a cb" style="left:406px;top:760px"></div>
<div class="t cell lnk" style="left:483px;top:763px">演示环境-odic协议客户端示例</div>
<div class="t cell" style="left:888px;top:763px">2022-01-25 11:06:46</div>
<div class="t cell" style="left:1289px;top:763px">用户中心</div>
<div class="t cell" style="left:1689px;top:763px">演示环境-odic协议客户端示例</div>
<div class="a ab" style="left:2104px;top:749px;"><svg width="18" height="18" viewBox="0 0 18 18"><path d="M14.32 10.94 L16.41 10.61 L16.41 7.19 L14.32 6.86 L13.43 5.31 L14.18 3.34 L11.22 1.63 L9.89 3.27 L8.11 3.27 L6.78 1.63 L3.82 3.34 L4.57 5.31 L3.68 6.86 L1.59 7.19 L1.59 10.61 L3.68 10.94 L4.57 12.49 L3.82 14.46 L6.78 16.17 L8.11 14.53 L9.89 14.53 L11.22 16.17 L14.18 14.46 L13.43 12.49Z" fill="none" stroke="#2f3e48" stroke-width="1.15" stroke-linejoin="round"/><circle cx="9" cy="8.9" r="3.7" fill="none" stroke="#2f3e48" stroke-width="1.15"/></svg></div>
<div class="a ab" style="left:2163px;top:749px;"><svg width="18" height="18" viewBox="0 0 18 18"><circle cx="9" cy="9" r="7.2" fill="none" stroke="#2f3e48" stroke-width="1.1"/><path d="M8.6 4.8v5h4.6" fill="none" stroke="#2f3e48" stroke-width="1.15"/></svg></div>
<div class="a ab" style="left:2222px;top:749px;"><svg width="18" height="18" viewBox="0 0 18 18"><rect x="5" y="1.8" width="11.1" height="11.3" rx="1.9" fill="none" stroke="#2f3e48" stroke-width="1.15"/><path d="M3.7 4.9h-.4a1.5 1.5 0 0 0-1.5 1.5v8.4a1.5 1.5 0 0 0 1.5 1.5h8.4a1.5 1.5 0 0 0 1.5-1.5v-.3" fill="none" stroke="#2f3e48" stroke-width="1.15"/></svg></div>
<div class="a ab" style="left:2281px;top:749px;"><svg width="18" height="18" viewBox="0 0 18 18"><circle cx="8.9" cy="9" r="7.75" fill="#34434d"/><ellipse cx="10.4" cy="4.9" rx="1.1" ry="1" fill="#fff"/><path d="M8.6 7.2h2.2l-1.7 6.6H7.2z" fill="#fff"/><path d="M7.4 7.4h1.6M7.9 13.6h1.7" stroke="#fff" stroke-width="0.7"/></svg></div>
<div class="a ab" style="left:2340px;top:749px;"><svg width="18" height="18" viewBox="0 0 18 18"><path d="M8.96 1.6 13.24 4.2 6.74 14.9 2.78 16.6 2.46 12.3Z" fill="none" stroke="#2f3e48" stroke-width="1.1" stroke-linejoin="round"/><path d="M7.6 4.0 11.9 6.6M2.46 12.3 6.74 14.9" stroke="#2f3e48" stroke-width="1.1"/><path d="M8.3 16.5H16.6" stroke="#2f3e48" stroke-width="1.15"/></svg></div>
<div class="a ab" style="left:2399px;top:749px;"><svg width="18" height="18" viewBox="0 0 18 18"><path d="M1.2 4.3H16.6" stroke="#2f3e48" stroke-width="1.15"/><path d="M6.6 4.2V1.9h4.8v2.3" fill="#8a969e" stroke="#2f3e48" stroke-width="1.1"/><path d="M3.3 4.3V16h11.3V4.3" fill="none" stroke="#2f3e48" stroke-width="1.15"/><path d="M7.4 7.1v6.5M10.7 7.1v6.5" stroke="#2f3e48" stroke-width="1.1"/></svg></div>
<div class="a" style="left:385px;top:876px;width:2094px;height:1px;background:#e6ebf5"></div>
<div class="a cb" style="left:406px;top:830px"></div>
<div class="t cell lnk" style="left:483px;top:833px">演示环境-oauth协议客户端示例</div>
<div class="t cell" style="left:888px;top:833px">2022-01-25 11:02:45</div>
<div class="t cell" style="left:1289px;top:833px">用户中心</div>
<div class="t cell" style="left:1689px;top:833px">演示环境-oauth协议客户端示例</div>
<div class="a ab" style="left:2104px;top:819px;"><svg width="18" height="18" viewBox="0 0 18 18"><path d="M14.32 10.94 L16.41 10.61 L16.41 7.19 L14.32 6.86 L13.43 5.31 L14.18 3.34 L11.22 1.63 L9.89 3.27 L8.11 3.27 L6.78 1.63 L3.82 3.34 L4.57 5.31 L3.68 6.86 L1.59 7.19 L1.59 10.61 L3.68 10.94 L4.57 12.49 L3.82 14.46 L6.78 16.17 L8.11 14.53 L9.89 14.53 L11.22 16.17 L14.18 14.46 L13.43 12.49Z" fill="none" stroke="#2f3e48" stroke-width="1.15" stroke-linejoin="round"/><circle cx="9" cy="8.9" r="3.7" fill="none" stroke="#2f3e48" stroke-width="1.15"/></svg></div>
<div class="a ab" style="left:2163px;top:819px;"><svg width="18" height="18" viewBox="0 0 18 18"><circle cx="9" cy="9" r="7.2" fill="none" stroke="#2f3e48" stroke-width="1.1"/><path d="M8.6 4.8v5h4.6" fill="none" stroke="#2f3e48" stroke-width="1.15"/></svg></div>
<div class="a ab" style="left:2222px;top:819px;"><svg width="18" height="18" viewBox="0 0 18 18"><rect x="5" y="1.8" width="11.1" height="11.3" rx="1.9" fill="none" stroke="#2f3e48" stroke-width="1.15"/><path d="M3.7 4.9h-.4a1.5 1.5 0 0 0-1.5 1.5v8.4a1.5 1.5 0 0 0 1.5 1.5h8.4a1.5 1.5 0 0 0 1.5-1.5v-.3" fill="none" stroke="#2f3e48" stroke-width="1.15"/></svg></div>
<div class="a ab" style="left:2281px;top:819px;"><svg width="18" height="18" viewBox="0 0 18 18"><circle cx="8.9" cy="9" r="7.75" fill="#34434d"/><ellipse cx="10.4" cy="4.9" rx="1.1" ry="1" fill="#fff"/><path d="M8.6 7.2h2.2l-1.7 6.6H7.2z" fill="#fff"/><path d="M7.4 7.4h1.6M7.9 13.6h1.7" stroke="#fff" stroke-width="0.7"/></svg></div>
<div class="a ab" style="left:2340px;top:819px;"><svg width="18" height="18" viewBox="0 0 18 18"><path d="M8.96 1.6 13.24 4.2 6.74 14.9 2.78 16.6 2.46 12.3Z" fill="none" stroke="#2f3e48" stroke-width="1.1" stroke-linejoin="round"/><path d="M7.6 4.0 11.9 6.6M2.46 12.3 6.74 14.9" stroke="#2f3e48" stroke-width="1.1"/><path d="M8.3 16.5H16.6" stroke="#2f3e48" stroke-width="1.15"/></svg></div>
<div class="a ab" style="left:2399px;top:819px;"><svg width="18" height="18" viewBox="0 0 18 18"><path d="M1.2 4.3H16.6" stroke="#2f3e48" stroke-width="1.15"/><path d="M6.6 4.2V1.9h4.8v2.3" fill="#8a969e" stroke="#2f3e48" stroke-width="1.1"/><path d="M3.3 4.3V16h11.3V4.3" fill="none" stroke="#2f3e48" stroke-width="1.15"/><path d="M7.4 7.1v6.5M10.7 7.1v6.5" stroke="#2f3e48" stroke-width="1.1"/></svg></div>
<div class="a" style="left:385px;top:946px;width:2094px;height:1px;background:#e6ebf5"></div>
<div class="a cb" style="left:406px;top:900px"></div>
<div class="t cell lnk" style="left:483px;top:903px">演示环境-jwt协议客户端示例</div>
<div class="t cell" style="left:888px;top:903px">2022-01-25 10:58:04</div>
<div class="t cell" style="left:1289px;top:903px">用户中心</div>
<div class="t cell" style="left:1689px;top:903px">演示环境-jwt协议客户端示例</div>
<div class="a ab" style="left:2104px;top:889px;"><svg width="18" height="18" viewBox="0 0 18 18"><path d="M14.32 10.94 L16.41 10.61 L16.41 7.19 L14.32 6.86 L13.43 5.31 L14.18 3.34 L11.22 1.63 L9.89 3.27 L8.11 3.27 L6.78 1.63 L3.82 3.34 L4.57 5.31 L3.68 6.86 L1.59 7.19 L1.59 10.61 L3.68 10.94 L4.57 12.49 L3.82 14.46 L6.78 16.17 L8.11 14.53 L9.89 14.53 L11.22 16.17 L14.18 14.46 L13.43 12.49Z" fill="none" stroke="#2f3e48" stroke-width="1.15" stroke-linejoin="round"/><circle cx="9" cy="8.9" r="3.7" fill="none" stroke="#2f3e48" stroke-width="1.15"/></svg></div>
<div class="a ab" style="left:2163px;top:889px;"><svg width="18" height="18" viewBox="0 0 18 18"><circle cx="9" cy="9" r="7.2" fill="none" stroke="#2f3e48" stroke-width="1.1"/><path d="M8.6 4.8v5h4.6" fill="none" stroke="#2f3e48" stroke-width="1.15"/></svg></div>
<div class="a ab" style="left:2222px;top:889px;"><svg width="18" height="18" viewBox="0 0 18 18"><rect x="5" y="1.8" width="11.1" height="11.3" rx="1.9" fill="none" stroke="#2f3e48" stroke-width="1.15"/><path d="M3.7 4.9h-.4a1.5 1.5 0 0 0-1.5 1.5v8.4a1.5 1.5 0 0 0 1.5 1.5h8.4a1.5 1.5 0 0 0 1.5-1.5v-.3" fill="none" stroke="#2f3e48" stroke-width="1.15"/></svg></div>
<div class="a ab" style="left:2281px;top:889px;"><svg width="18" height="18" viewBox="0 0 18 18"><circle cx="8.9" cy="9" r="7.75" fill="#34434d"/><ellipse cx="10.4" cy="4.9" rx="1.1" ry="1" fill="#fff"/><path d="M8.6 7.2h2.2l-1.7 6.6H7.2z" fill="#fff"/><path d="M7.4 7.4h1.6M7.9 13.6h1.7" stroke="#fff" stroke-width="0.7"/></svg></div>
<div class="a ab" style="left:2340px;top:889px;"><svg width="18" height="18" viewBox="0 0 18 18"><path d="M8.96 1.6 13.24 4.2 6.74 14.9 2.78 16.6 2.46 12.3Z" fill="none" stroke="#2f3e48" stroke-width="1.1" stroke-linejoin="round"/><path d="M7.6 4.0 11.9 6.6M2.46 12.3 6.74 14.9" stroke="#2f3e48" stroke-width="1.1"/><path d="M8.3 16.5H16.6" stroke="#2f3e48" stroke-width="1.15"/></svg></div>
<div class="a ab" style="left:2399px;top:889px;"><svg width="18" height="18" viewBox="0 0 18 18"><path d="M1.2 4.3H16.6" stroke="#2f3e48" stroke-width="1.15"/><path d="M6.6 4.2V1.9h4.8v2.3" fill="#8a969e" stroke="#2f3e48" stroke-width="1.1"/><path d="M3.3 4.3V16h11.3V4.3" fill="none" stroke="#2f3e48" stroke-width="1.15"/><path d="M7.4 7.1v6.5M10.7 7.1v6.5" stroke="#2f3e48" stroke-width="1.1"/></svg></div>
<div class="a" style="left:385px;top:1016px;width:2094px;height:1px;background:#e6ebf5"></div>
<div class="a cb" style="left:406px;top:970px"></div>
<div class="t cell lnk" style="left:483px;top:973px">演示环境-千行用户中心前端</div>
<div class="t cell" style="left:888px;top:973px">2022-01-25 10:07:24</div>
<div class="t cell" style="left:1289px;top:973px">用户中心</div>
<div class="t cell" style="left:1689px;top:973px">演示环境-千行用户中心前端</div>
<div class="a ab" style="left:2104px;top:959px;"><svg width="18" height="18" viewBox="0 0 18 18"><path d="M14.32 10.94 L16.41 10.61 L16.41 7.19 L14.32 6.86 L13.43 5.31 L14.18 3.34 L11.22 1.63 L9.89 3.27 L8.11 3.27 L6.78 1.63 L3.82 3.34 L4.57 5.31 L3.68 6.86 L1.59 7.19 L1.59 10.61 L3.68 10.94 L4.57 12.49 L3.82 14.46 L6.78 16.17 L8.11 14.53 L9.89 14.53 L11.22 16.17 L14.18 14.46 L13.43 12.49Z" fill="none" stroke="#2f3e48" stroke-width="1.15" stroke-linejoin="round"/><circle cx="9" cy="8.9" r="3.7" fill="none" stroke="#2f3e48" stroke-width="1.15"/></svg></div>
<div class="a ab" style="left:2163px;top:959px;"><svg width="18" height="18" viewBox="0 0 18 18"><circle cx="9" cy="9" r="7.2" fill="none" stroke="#2f3e48" stroke-width="1.1"/><path d="M8.6 4.8v5h4.6" fill="none" stroke="#2f3e48" stroke-width="1.15"/></svg></div>
<div class="a ab" style="left:2222px;top:959px;"><svg width="18" height="18" viewBox="0 0 18 18"><rect x="5" y="1.8" width="11.1" height="11.3" rx="1.9" fill="none" stroke="#2f3e48" stroke-width="1.15"/><path d="M3.7 4.9h-.4a1.5 1.5 0 0 0-1.5 1.5v8.4a1.5 1.5 0 0 0 1.5 1.5h8.4a1.5 1.5 0 0 0 1.5-1.5v-.3" fill="none" stroke="#2f3e48" stroke-width="1.15"/></svg></div>
<div class="a ab" style="left:2281px;top:959px;"><svg width="18" height="18" viewBox="0 0 18 18"><circle cx="8.9" cy="9" r="7.75" fill="#34434d"/><ellipse cx="10.4" cy="4.9" rx="1.1" ry="1" fill="#fff"/><path d="M8.6 7.2h2.2l-1.7 6.6H7.2z" fill="#fff"/><path d="M7.4 7.4h1.6M7.9 13.6h1.7" stroke="#fff" stroke-width="0.7"/></svg></div>
<div class="a ab" style="left:2340px;top:959px;"><svg width="18" height="18" viewBox="0 0 18 18"><path d="M8.96 1.6 13.24 4.2 6.74 14.9 2.78 16.6 2.46 12.3Z" fill="none" stroke="#2f3e48" stroke-width="1.1" stroke-linejoin="round"/><path d="M7.6 4.0 11.9 6.6M2.46 12.3 6.74 14.9" stroke="#2f3e48" stroke-width="1.1"/><path d="M8.3 16.5H16.6" stroke="#2f3e48" stroke-width="1.15"/></svg></div>
<div class="a ab" style="left:2399px;top:959px;"><svg width="18" height="18" viewBox="0 0 18 18"><path d="M1.2 4.3H16.6" stroke="#2f3e48" stroke-width="1.15"/><path d="M6.6 4.2V1.9h4.8v2.3" fill="#8a969e" stroke="#2f3e48" stroke-width="1.1"/><path d="M3.3 4.3V16h11.3V4.3" fill="none" stroke="#2f3e48" stroke-width="1.15"/><path d="M7.4 7.1v6.5M10.7 7.1v6.5" stroke="#2f3e48" stroke-width="1.1"/></svg></div>
<div class="a" style="left:2157px;top:319px;width:60px;height:63px;border:3.5px solid #e5141b"></div>
<div class="a" style="left:2138px;top:266px;width:102px;height:45px;background:#171717;border-radius:6px"></div>
<svg class="a" style="left:2178px;top:309px" width="22" height="11" viewBox="0 0 22 11"><path d="M1.8 1.2H20.2L11 10z" fill="#171717" stroke="#3a4a55" stroke-width="0.8"/><path d="M1 0H21V1.6H1z" fill="#171717"/></svg>
<div class="t" style="left:2152px;top:278px;font-size:18px;color:#fff">定时触发</div>
<div class="t" style="left:1696px;top:1041px;font-size:21px;color:#2c3e50">共 28 条</div>
<div class="a pg" style="left:1796px;top:1028px"><svg width="12" height="18" viewBox="0 0 12 18"><path d="M9 2 3 9l6 7" fill="none" stroke="#b0b3b8" stroke-width="1.6"/></svg></div>
<div class="a pg" style="left:1856px;top:1028px;background:#1787ff;color:#fff">1</div>
<div class="a pg" style="left:1916px;top:1028px">2</div>
<div class="a pg" style="left:1976px;top:1028px">3</div>
<div class="a pg" style="left:2036px;top:1028px"><svg width="12" height="18" viewBox="0 0 12 18"><path d="M3 2l6 7-6 7" fill="none" stroke="#2c3e50" stroke-width="1.8"/></svg></div>
<div class="a" style="left:2096px;top:1028px;width:150px;height:47px;border:1px solid #e4e7ed;border-radius:5px;background:#f4f4f5"></div>
<div class="t" style="left:2124px;top:1042px;font-size:21px;color:#2c3e50">10条/页</div>
<svg class="a" style="left:2220px;top:1048px" width="14" height="9" viewBox="0 0 14 9"><path d="M1.5 1.5l5.5 5.5 5.5-5.5" fill="none" stroke="#a8abb2" stroke-width="1.3"/></svg>
<div class="t" style="left:2304px;top:1042px;font-size:21px;color:#2c3e50">前往</div>
<div class="a" style="left:2353px;top:1028px;width:69px;height:47px;border:1px solid #e4e7ed;border-radius:5px;background:#f4f4f5"></div>
<div class="t" style="left:2380px;top:1042px;font-size:21px;color:#2c3e50">1</div>
<div class="t" style="left:2427px;top:1042px;font-size:21px;color:#2c3e50">页</div>
<div class="a" style="left:2534px;top:156px;width:19px;height:1001px;background:#f0f0f0"></div>
<div class="a" style="left:2534px;top:222px;width:19px;height:909px;background:#c9c9c9"></div>
<svg class="a" style="left:2540px;top:160px" width="14" height="14" viewBox="0 0 14 14"><path d="M1 11.5 7 5 13 11.5" fill="none" stroke="#555" stroke-width="2.4"/></svg>
<svg class="a" style="left:2540px;top:1137px" width="14" height="14" viewBox="0 0 14 14"><path d="M1 3 6.8 10.5 12.6 3" fill="none" stroke="#555" stroke-width="2.4"/></svg>
<div class="a" style="left:330px;top:1157px;width:2223px;height:1px;background:#e4e4e4"></div>
<div class="t" style="left:1868px;top:1179px;font-size:18px;color:#6c7986">研运一体太空舱 V1.0.0 技术中台PBU 2021 | 版权所有 © <span style="color:#1a87ff">科大国创软件股份有限公司</span></div>
</body></html>
